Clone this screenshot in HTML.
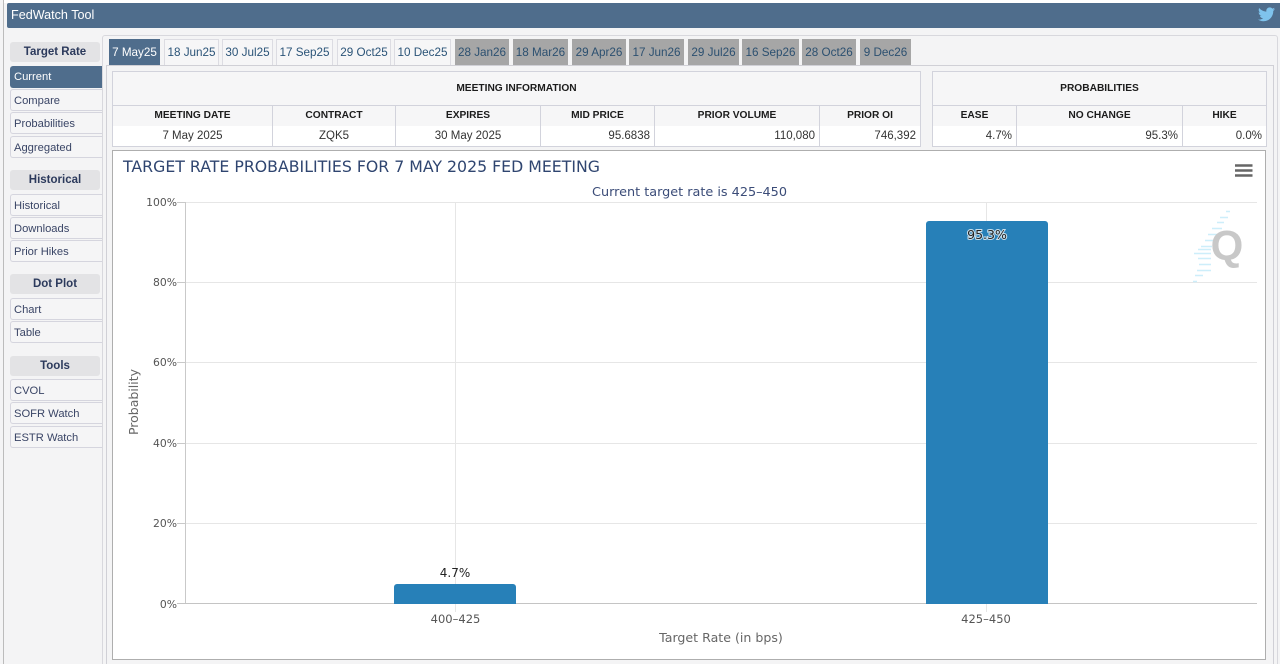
<!DOCTYPE html>
<html><head><meta charset="utf-8"><style>
html,body{margin:0;padding:0;width:1280px;height:664px;overflow:hidden;background:#f4f4f5}
*{box-sizing:border-box}
.a{position:absolute}
body{font-family:"Liberation Sans",sans-serif;font-size:12px;color:#2c2c2c}
#w{position:absolute;left:0;top:0;width:1280px;height:664px;overflow:hidden}
.side{position:absolute;left:10px;width:92px;height:22px;background:#f5f5f6;border:1px solid #d5d5de;border-right:0;border-radius:3px 0 0 3px;color:#3a4566;font-size:11.2px;line-height:22px;padding-left:3px;white-space:nowrap}
.sh{position:absolute;left:10px;width:90px;height:20px;background:#e3e3e5;border-radius:3px;color:#2c3a5c;font-weight:bold;font-size:11.5px;line-height:21px;text-align:center}
.tab{position:absolute;top:39px;height:26px;background:#f6f6f7;border:1px solid #dcdce2;border-bottom:0;color:#2b5478;font-size:11.7px;line-height:25px;text-align:center;white-space:nowrap}
.tab.g{background:#a6a6a6;border-color:#a6a6a6;color:#2c5070}
.tab.on{background:#4f6d8c;border-color:#4f6d8c;color:#fff}
.c{position:absolute;border-right:1px solid #d2d3dc;border-bottom:1px solid #d2d3dc;white-space:nowrap;color:#222}
.hd{font-weight:bold;font-size:10.2px;text-align:center;background:#f6f6f7;line-height:20px;height:21px;top:105.5px;color:#1c1c1c}
.v{font-size:11.5px;background:#fff;line-height:20px;height:21px;top:126px;color:#333}
.r{text-align:right;padding-right:4px}.m{text-align:center}
</style></head><body><div id="w">
<div class="a" style="left:3px;top:0;width:1px;height:664px;background:#bcbcbc"></div>
<div class="a" style="left:4px;top:0;width:1276px;height:3px;background:#fff"></div>
<div class="a" style="left:7px;top:3px;width:1273px;height:25px;background:#4f6d8c;border-radius:2px 0 0 2px;color:#fff;font-size:12.6px;line-height:25px;padding-left:4px">FedWatch Tool</div>
<svg class="a" style="left:1258px;top:7px" width="17" height="15" viewBox="0 0 24 20"><path fill="#7fc3ec" d="M24 2.400c-.9.4-1.800.7-2.800.8 1-.6 1.800-1.600 2.200-2.700-1 .6-2 1-3.100 1.200C19.300.7 18 0 16.600 0c-2.700 0-4.900 2.200-4.900 4.900 0 .4 0 .8.100 1.100C7.700 5.800 4.100 3.900 1.700.9c-.4.700-.7 1.600-.7 2.500 0 1.700.9 3.200 2.200 4.100-.8 0-1.600-.2-2.200-.6v.1c0 2.400 1.700 4.400 3.900 4.800-.7.200-1.500.2-2.200.1.600 2 2.400 3.400 4.600 3.400C5.600 16.500 3.400 17.300 1.100 17.300H0c2.200 1.400 4.800 2.200 7.500 2.200 9.100 0 14-7.500 14-14v-.6c1-.7 1.800-1.500 2.500-2.500z"/></svg>

<div class="a" style="left:102px;top:35px;width:1176px;height:640px;border:1px solid #d8d8dd;border-radius:3px 3px 0 0;background:#f4f4f5"></div>
<div class="a" style="left:106px;top:65px;width:1168px;height:610px;border:1px solid #d0d0d6;background:#f4f4f5"></div>

<div class="tab on" style="left:109px;width:51px">7 May25</div>
<div class="tab" style="left:164px;width:55px">18 Jun25</div>
<div class="tab" style="left:222px;width:51px">30 Jul25</div>
<div class="tab" style="left:276px;width:57px">17 Sep25</div>
<div class="tab" style="left:337px;width:54px">29 Oct25</div>
<div class="tab" style="left:394px;width:57px">10 Dec25</div>
<div class="tab g" style="left:455px;width:54px">28 Jan26</div>
<div class="tab g" style="left:513px;width:55px">18 Mar26</div>
<div class="tab g" style="left:572px;width:54px">29 Apr26</div>
<div class="tab g" style="left:629px;width:55px">17 Jun26</div>
<div class="tab g" style="left:688px;width:51px">29 Jul26</div>
<div class="tab g" style="left:742px;width:57px">16 Sep26</div>
<div class="tab g" style="left:802px;width:54px">28 Oct26</div>
<div class="tab g" style="left:860px;width:51px">9 Dec26</div>

<div class="sh" style="top:42px">Target Rate</div>
<div class="side" style="top:66px;background:#4f6d8c;border-color:#4f6d8c;color:#fff;line-height:21px">Current</div>
<div class="side" style="top:89px">Compare</div>
<div class="side" style="top:112px">Probabilities</div>
<div class="side" style="top:136px">Aggregated</div>
<div class="sh" style="top:170px">Historical</div>
<div class="side" style="top:194px">Historical</div>
<div class="side" style="top:217px">Downloads</div>
<div class="side" style="top:240px">Prior Hikes</div>
<div class="sh" style="top:274px">Dot Plot</div>
<div class="side" style="top:298px">Chart</div>
<div class="side" style="top:321px">Table</div>
<div class="sh" style="top:356px">Tools</div>
<div class="side" style="top:379px">CVOL</div>
<div class="side" style="top:402px">SOFR Watch</div>
<div class="side" style="top:426px">ESTR Watch</div>

<div class="a" style="left:112px;top:71px;width:809px;height:35px;background:#f6f6f7;border:1px solid #d2d3dc;font-weight:bold;font-size:10.2px;text-align:center;line-height:33px;color:#1c1c1c">MEETING INFORMATION</div>
<div class="a" style="left:112px;top:105px;width:1px;height:42px;background:#d2d3dc"></div>
<div class="c hd" style="left:113px;width:160px">MEETING DATE</div>
<div class="c hd" style="left:273px;width:123px">CONTRACT</div>
<div class="c hd" style="left:396px;width:145px">EXPIRES</div>
<div class="c hd" style="left:541px;width:114px">MID PRICE</div>
<div class="c hd" style="left:655px;width:165px">PRIOR VOLUME</div>
<div class="c hd" style="left:820px;width:101px">PRIOR OI</div>
<div class="c v m" style="left:113px;width:160px">7 May 2025</div>
<div class="c v m" style="left:273px;width:123px">ZQK5</div>
<div class="c v m" style="left:396px;width:145px">30 May 2025</div>
<div class="c v r" style="left:541px;width:114px">95.6838</div>
<div class="c v r" style="left:655px;width:165px">110,080</div>
<div class="c v r" style="left:820px;width:101px">746,392</div>

<div class="a" style="left:932px;top:71px;width:335px;height:35px;background:#f6f6f7;border:1px solid #d2d3dc;font-weight:bold;font-size:10.2px;text-align:center;line-height:33px;color:#1c1c1c">PROBABILITIES</div>
<div class="a" style="left:932px;top:105px;width:1px;height:42px;background:#d2d3dc"></div>
<div class="c hd" style="left:933px;width:84px">EASE</div>
<div class="c hd" style="left:1017px;width:166px">NO CHANGE</div>
<div class="c hd" style="left:1183px;width:84px">HIKE</div>
<div class="c v r" style="left:933px;width:84px">4.7%</div>
<div class="c v r" style="left:1017px;width:166px">95.3%</div>
<div class="c v r" style="left:1183px;width:84px">0.0%</div>

<div class="a" style="left:112px;top:150px;width:1154px;height:510px;background:#fff;border:1px solid #aeaeae"></div>
<svg class="a" style="left:112px;top:150px" width="1154" height="510" viewBox="112 150 1154 510" font-family="DejaVu Sans, sans-serif">
<g stroke="#e6e6e6" stroke-width="1" fill="none">
<path d="M185 202.500H1257M185 282.500H1257M185 362.500H1257M185 443.500H1257M185 523.500H1257"/>
<path d="M455.500 202V604M986.500 202V604"/>
<path d="M455.500 604V612M986.500 604V612"/>
</g>
<path d="M185.500 202V604M177 202.500H185M177 282.500H185M177 362.500H185M177 443.500H185M177 523.500H185" stroke="#c9c9c9" fill="none"/>
<path d="M177 603.500H1257" stroke="#c4c4c4" fill="none"/>
<path d="M394 604V587a3 3 0 0 1 3-3H513a3 3 0 0 1 3 3V604Z" fill="#2780b8"/>
<path d="M926 604V224a3 3 0 0 1 3-3H1045a3 3 0 0 1 3 3V604Z" fill="#2780b8"/>
<text x="123" y="172" font-size="16" fill="#2f4570" textLength="477" lengthAdjust="spacingAndGlyphs">TARGET RATE PROBABILITIES FOR 7 MAY 2025 FED MEETING</text>
<text x="689.500" y="196" font-size="12.500" fill="#3b4c78" text-anchor="middle" textLength="195" lengthAdjust="spacingAndGlyphs">Current target rate is 425–450</text>
<g font-size="10.800" fill="#555" text-anchor="end">
<text x="177" y="206">100%</text><text x="177" y="286">80%</text><text x="177" y="366">60%</text><text x="177" y="447">40%</text><text x="177" y="527">20%</text><text x="177" y="608">0%</text>
</g>
<g font-size="11.500" fill="#555" text-anchor="middle">
<text x="455.500" y="623">400–425</text><text x="986" y="623">425–450</text>
</g>
<text x="721" y="642" font-size="12.600" fill="#666" text-anchor="middle">Target Rate (in bps)</text>
<text transform="translate(138,402) rotate(-90)" font-size="12.500" fill="#666" text-anchor="middle">Probability</text>
<text x="455" y="577" font-size="12" fill="#222" text-anchor="middle">4.7%</text>
<text x="987" y="239" font-size="12.500" fill="#222" stroke="#fff" stroke-width="2" paint-order="stroke" stroke-opacity=".75" text-anchor="middle">95.3%</text>
<path d="M1235 165.500H1252.500M1235 170.500H1252.500M1235 175.500H1252.500" stroke="#666" stroke-width="2.500" fill="none"/>
<g stroke="#cdeefa" stroke-width="1.500" fill="none">
<path d="M1226 211.500h4M1220 217.500h8M1217 222.500h7M1212 228.500h10M1208 234.500h14M1205 240.500h8M1201 246.500h11M1198 249.500h13M1194 253.500h17M1198 258.500h13M1199 264.500h12M1197 270.500h14M1195 275.500h8M1193 281.500h4"/>
</g>
<text x="1227" y="260" font-family="Liberation Sans, sans-serif" font-weight="bold" font-size="42" fill="#c8c8c8" text-anchor="middle">Q</text>
</svg>
</div></body></html>
